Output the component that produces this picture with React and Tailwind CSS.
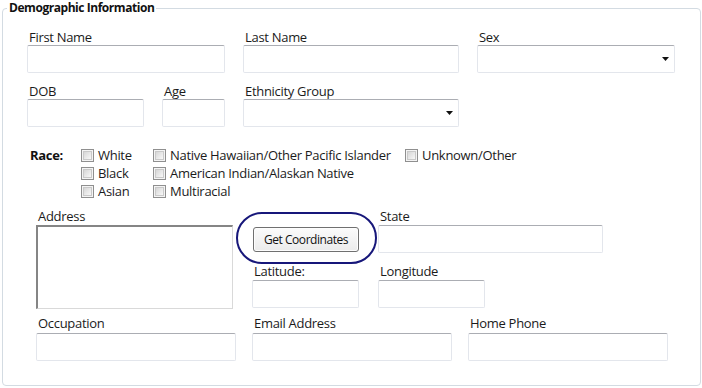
import React from "react";

function Input({ w, select }) {
  return (
    <div
      className={`${w} h-[28px] rounded-[2px] border border-[#e3e6ec] border-t-[#abadb3] bg-white flex items-center justify-end pr-[5px]`}
    >
      {select ? (
        <svg width="7" height="4" viewBox="0 0 7 4">
          <path d="M0 0H7L3.5 4Z" fill="#111" />
        </svg>
      ) : null}
    </div>
  );
}

function Field({ label, w, select, lh }) {
  return (
    <div className="flex flex-col">
      <div className={`${lh || "h-4 leading-4"} pl-[2px] whitespace-nowrap`}>{label}</div>
      <Input w={w} select={select} />
    </div>
  );
}

function Check({ label }) {
  return (
    <div className="h-[18px] flex items-start gap-[4px] whitespace-nowrap">
      <div className="mt-[2px] w-[13px] h-[13px] border border-[#8f8f8f] bg-[#f4f4f4] p-[1px]">
        <div className="w-full h-full border border-[#c9c9c9] bg-linear-to-br from-[#d6d6d6] to-[#f8f8f8]" />
      </div>
      <div className="leading-[14px] mt-[1px]">{label}</div>
    </div>
  );
}

export default function App() {
  return (
    <div className="w-[702px] h-[388px] bg-white overflow-hidden font-['Open_Sans',sans-serif] text-[13px] tracking-[-0.3px] text-[#1b1b1b]">
      <fieldset className="ml-[2px] w-[699px] h-[386px] border border-[#d3dbe2] rounded-[4px]">
        <legend className="ml-[4px] px-[2px] text-[12px] font-bold leading-4 tracking-[-0.45px] text-[#111]">
          Demographic Information
        </legend>

        <div className="mt-[13px] ml-[24px] flex gap-[18px]">
          <Field label="First Name" w="w-[198px]" />
          <Field label="Last Name" w="w-[216px]" />
          <Field label="Sex" w="w-[198px]" select />
        </div>

        <div className="mt-[10px] ml-[24px] flex gap-[18px]">
          <Field label="DOB" w="w-[117px]" />
          <Field label="Age" w="w-[63px]" />
          <Field label="Ethnicity Group" w="w-[216px]" select />
        </div>

        <div className="mt-[20px] flex">
          <div className="w-[78px] pl-[27px]">
            <div className="mt-[1px] leading-[14px] font-bold text-[#111]">Race:</div>
          </div>
          <div className="w-[72px] flex flex-col">
            <Check label="White" />
            <Check label="Black" />
            <Check label="Asian" />
          </div>
          <div className="w-[252px] flex flex-col">
            <Check label="Native Hawaiian/Other Pacific Islander" />
            <Check label="American Indian/Alaskan Native" />
            <Check label="Multiracial" />
          </div>
          <div className="flex flex-col">
            <Check label="Unknown/Other" />
          </div>
        </div>

        <div className="mt-[8px] ml-[33px] flex gap-[19px]">
          <div className="w-[197px] flex flex-col">
            <div className="h-4 leading-[14px] pl-[2px]">Address</div>
            <div className="h-[84px] bg-white border-t-2 border-l-2 border-t-[#858585] border-l-[#858585] border-r border-b border-r-[#d9d9d9] border-b-[#d9d9d9]" />
          </div>
          <div className="w-[107px] flex flex-col">
            <div className="relative h-[44px] pt-[18px] pl-[1px]">
              <div className="w-[106px] h-[25px] rounded-[3px] border border-[#707070] bg-linear-to-b from-[#fbfbfb] to-[#ebebeb] shadow-[inset_0_0_0_1px_#fdfdfd] flex items-center justify-center text-[12px] tracking-[-0.45px] text-[#111] whitespace-nowrap">
                Get Coordinates
              </div>
              <div className="absolute left-[-16px] top-[3px] w-[141px] h-[52px] rounded-full border-2 border-[#17177a]" />
            </div>
            <div className="mt-[11px]">
              <Field label="Latitude:" w="w-[107px]" lh="h-4 leading-[14px]" />
            </div>
          </div>
          <div className="w-[225px] flex flex-col">
            <Field label="State" w="w-[225px]" lh="h-4 leading-[14px]" />
            <div className="mt-[11px]">
              <Field label="Longitude" w="w-[107px]" lh="h-4 leading-[14px]" />
            </div>
          </div>
        </div>

        <div className="mt-[7px] ml-[33px] flex gap-[16px]">
          <Field label="Occupation" w="w-[200px]" lh="h-[17px] leading-[14px]" />
          <Field label="Email Address" w="w-[200px]" lh="h-[17px] leading-[14px]" />
          <Field label="Home Phone" w="w-[200px]" lh="h-[17px] leading-[14px]" />
        </div>
      </fieldset>
    </div>
  );
}
